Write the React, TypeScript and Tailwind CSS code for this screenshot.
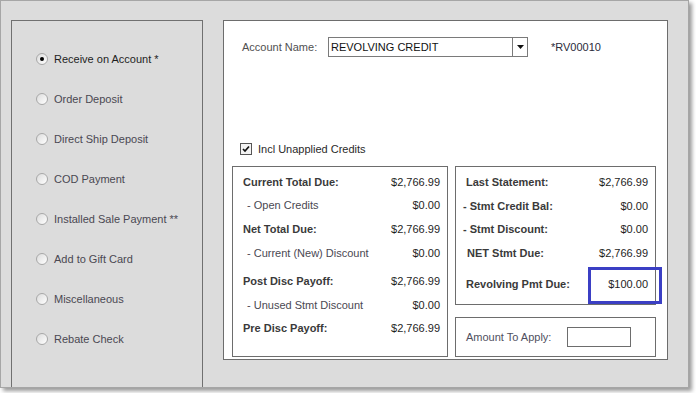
import React from "react";

const options = [
  { label: "Receive on Account *", checked: true },
  { label: "Order Deposit" },
  { label: "Direct Ship Deposit" },
  { label: "COD Payment" },
  { label: "Installed Sale Payment **" },
  { label: "Add to Gift Card" },
  { label: "Miscellaneous" },
  { label: "Rebate Check" },
];

const leftRows = [
  { label: "Current Total Due:", value: "$2,766.99", bold: true, mt: "mt-0" },
  { label: "- Open Credits", value: "$0.00", mt: "mt-[3px]" },
  { label: "Net Total Due:", value: "$2,766.99", bold: true, mt: "mt-[4px]" },
  { label: "- Current (New) Discount", value: "$0.00", mt: "mt-[4px]" },
  { label: "Post Disc Payoff:", value: "$2,766.99", bold: true, mt: "mt-[8px]" },
  { label: "- Unused Stmt Discount", value: "$0.00", mt: "mt-[4px]" },
  { label: "Pre Disc Payoff:", value: "$2,766.99", bold: true, mt: "mt-[3px]" },
];

const rightRows = [
  { label: "Last Statement:", value: "$2,766.99", pl: "pl-[10px]", mt: "mt-0" },
  { label: "- Stmt Credit Bal:", value: "$0.00", pl: "pl-[7px]", mt: "mt-[4px]" },
  { label: "- Stmt Discount:", value: "$0.00", pl: "pl-[7px]", mt: "mt-[3px]" },
  { label: "NET Stmt Due:", value: "$2,766.99", pl: "pl-[11px]", mt: "mt-[4px]" },
  { label: "Revolving Pmt Due:", value: "$100.00", pl: "pl-[10px]", mt: "mt-[11px]" },
];

function Radio({ checked }: { checked?: boolean }) {
  return (
    <span className="w-[12px] h-[12px] rounded-full border border-[#a8a8a8] bg-[linear-gradient(135deg,#dcdcdc,#ffffff)] flex items-center justify-center shrink-0">
      {checked && <span className="w-[4px] h-[4px] rounded-full bg-black" />}
    </span>
  );
}

export default function App() {
  return (
    <div className="w-[696px] h-[393px] bg-white overflow-hidden font-['Liberation_Sans',Arial,sans-serif] text-[11px]">
      <div className="w-[689px] h-[388px] bg-[#dcdcdc] border border-[#a6a6a6] shadow-[3px_3px_4px_rgba(0,0,0,0.4)] flex items-start pl-[10px] pt-[19px]">
        {/* left options */}
        <div className="w-[192px] h-[367px] border-l border-r border-t border-[#707070] pt-[18px] pl-[24px] flex flex-col">
          {options.map((o) => (
            <div key={o.label} className="h-[40px] flex items-center gap-[6px]">
              <Radio checked={o.checked} />
              <span className={o.checked ? "text-[#1e1e1e]" : "text-[#4a4852]"}>{o.label}</span>
            </div>
          ))}
        </div>

        {/* right panel */}
        <div className="ml-[20px] w-[445px] h-[340px] bg-white border border-[#6d6d6d] flex flex-col">
          <div className="mt-[16px] ml-[18px] flex items-center h-[20px]">
            <span className="text-[#505050] w-[86px]">Account Name:</span>
            <div className="w-[200px] h-[20px] border border-[#7a7a7a] flex items-center">
              <span className="flex-1 pl-[2px] pt-[1px] text-[#111]">REVOLVING CREDIT</span>
              <span className="w-[15px] h-full border-l border-[#7a7a7a] flex items-center justify-center">
                <svg width="7" height="4" viewBox="0 0 7 4">
                  <path d="M0 0h7L3.5 4z" fill="#111" />
                </svg>
              </span>
            </div>
            <span className="ml-[23px] pt-[1px] text-[#2a2a3a]">*RV00010</span>
          </div>

          <div className="mt-[86px] ml-[16px] flex items-center h-[12px] gap-[6px]">
            <span className="w-[12px] h-[12px] border border-[#555] bg-[#f4f4f4] flex items-center justify-center">
              <svg width="8" height="8" viewBox="0 0 8 8">
                <path d="M1 4l2 2L7 1.5" stroke="#111" strokeWidth="1.7" fill="none" />
              </svg>
            </span>
            <span className="pt-[1px] text-[#2a2a2a]">Incl Unapplied Credits</span>
          </div>

          <div className="mt-[11px] ml-[8px] flex gap-[7px]">
            <div className="w-[216px] h-[191px] border border-[#6d6d6d] pt-[5px] pl-[10px] pr-[7px] flex flex-col">
              {leftRows.map((r) => (
                <div key={r.label} className={`${r.mt} h-[20px] flex items-center justify-between`}>
                  <span className={r.bold ? "font-bold text-[#3a3a3a]" : "pl-[4px] text-[#4a4852]"}>{r.label}</span>
                  <span className="text-[#1e1e1e]">{r.value}</span>
                </div>
              ))}
            </div>

            <div className="flex flex-col">
              <div className="relative w-[201px] h-[139px] border border-[#6d6d6d] pt-[5px] pr-[7px] flex flex-col">
                {rightRows.map((r) => (
                  <div key={r.label} className={`${r.mt} ${r.pl} h-[20px] flex items-center justify-between`}>
                    <span className="font-bold text-[#3a3a3a]">{r.label}</span>
                    <span className="text-[#1e1e1e]">{r.value}</span>
                  </div>
                ))}
                <div className="absolute left-[132px] top-[100px] w-[74px] h-[37px] border-[3px] border-[#3b3fc4]" />
              </div>
              <div className="mt-[12px] w-[201px] h-[40px] border border-[#6d6d6d] flex items-center pl-[10px]">
                <span className="text-[#505060] w-[101px] pt-[1px]">Amount To Apply:</span>
                <span className="w-[64px] h-[20px] border border-[#6d6d6d]" />
              </div>
            </div>
          </div>
        </div>
      </div>
    </div>
  );
}
